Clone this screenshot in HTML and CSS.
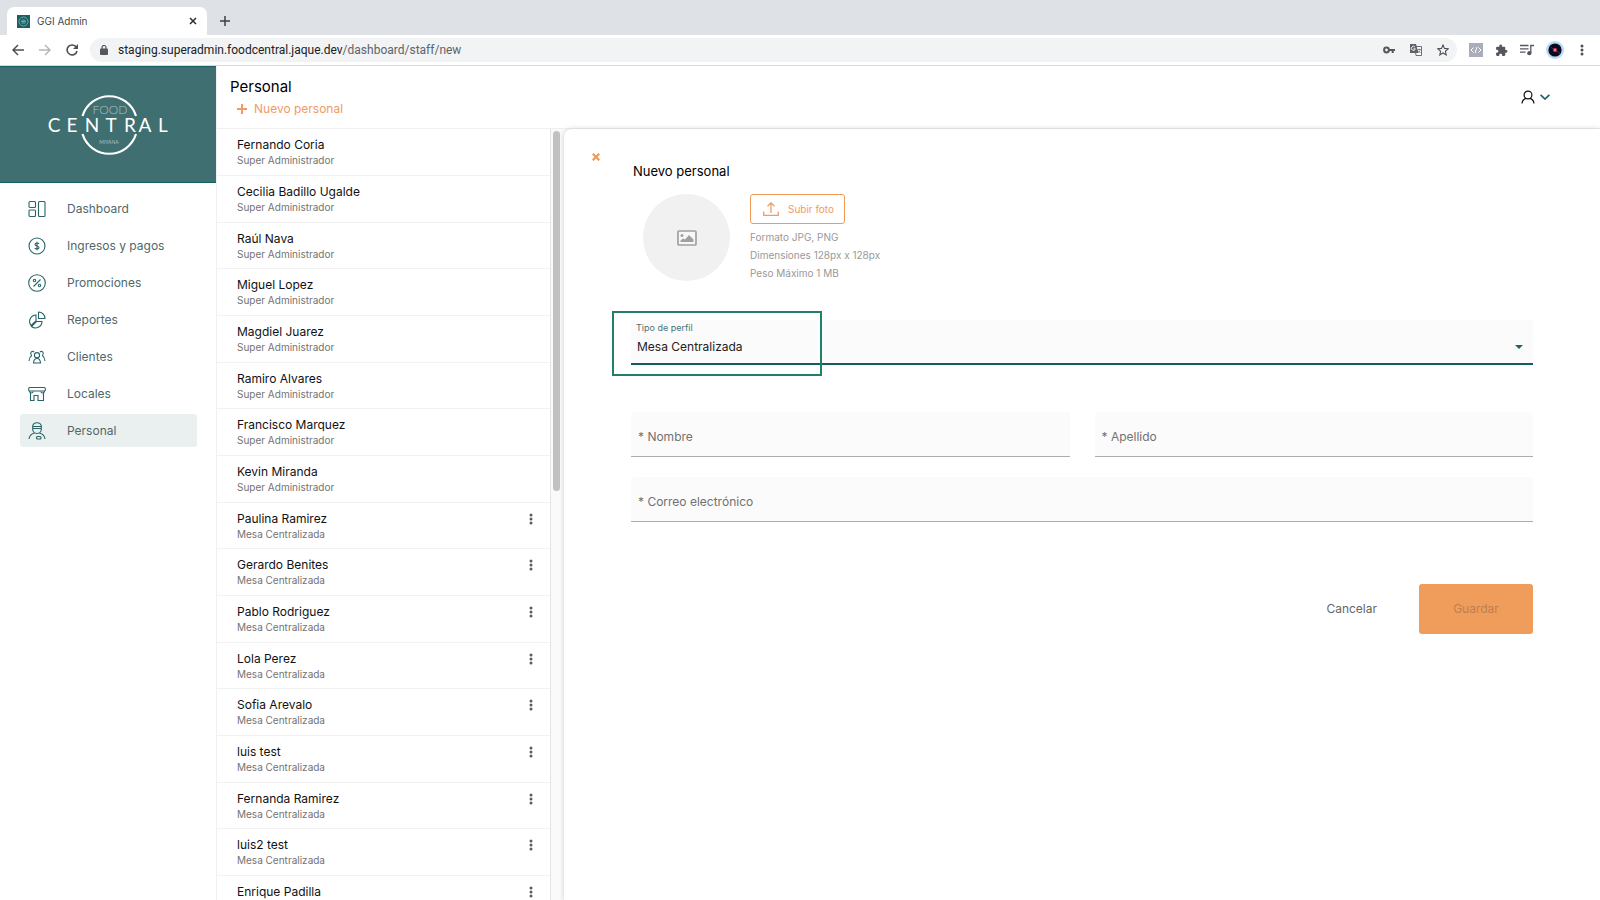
FILE: index.html
```html
<!DOCTYPE html>
<html lang="es">
<head>
<meta charset="utf-8">
<title>GGI Admin</title>
<link rel="stylesheet" href="styles.css">
</head>
<body>
<svg class="defs" width="0" height="0" aria-hidden="true">
  <symbol id="dots" viewBox="0 0 4 12"><circle cx="2" cy="2" r="1.5"/><circle cx="2" cy="6" r="1.5"/><circle cx="2" cy="10" r="1.5"/></symbol>
</svg>

<div class="tabstrip">
  <div class="tab">
    <svg class="favicon" viewBox="0 0 13 13"><rect width="13" height="13" fill="#176064"/><circle cx="6.500" cy="6.500" r="4.500" fill="none" stroke="#8fb3b4" stroke-width=".8"/><path d="M4.500 5.200h4M4 6.600h5M4.500 8h4" stroke="#a9c6c6" stroke-width=".7"/></svg>
    <span class="tab-title">GGI Admin</span>
    <button class="icon-btn" type="button" aria-label="Cerrar pestaña"><svg width="8" height="8" viewBox="0 0 8 8"><path d="M1 1l6 6M7 1L1 7" stroke="#2b2d30" stroke-width="1.500"/></svg></button>
  </div>
  <button class="icon-btn new-tab" type="button" aria-label="Nueva pestaña"><svg width="10" height="10" viewBox="0 0 10 10"><path d="M5 0v10M0 5h10" stroke="#3c4043" stroke-width="1.500"/></svg></button>
</div>

<div class="toolbar">
  <button class="icon-btn" type="button" aria-label="Atrás"><svg width="12" height="12" viewBox="0 0 12 12" fill="none" stroke="#4d5156" stroke-width="1.500"><path d="M12 6H1M6 1L1 6l5 5"/></svg></button>
  <button class="icon-btn" type="button" aria-label="Adelante"><svg width="12" height="12" viewBox="0 0 12 12" fill="none" stroke="#b4b6b9" stroke-width="1.500"><path d="M0 6h11M6 1l5 5-5 5"/></svg></button>
  <button class="icon-btn" type="button" aria-label="Recargar"><svg width="12" height="12" viewBox="0 0 12 12"><path d="M10.300 3.200A5 5 0 1 0 11 7" fill="none" stroke="#4d5156" stroke-width="1.600"/><path d="M12 0v5H7z" fill="#4d5156"/></svg></button>
  <div class="address">
    <svg width="8" height="10" viewBox="0 0 8 10"><rect y="3.500" width="8" height="6.500" rx="1" fill="#54585d"/><path d="M2 4V2.500a2 2 0 0 1 4 0V4" fill="none" stroke="#54585d" stroke-width="1.200"/></svg>
    <span class="url">staging.superadmin.foodcentral.jaque.dev<span class="url-path">/dashboard/staff/new</span></span>
    <span class="address-icons">
      <svg width="12" height="8" viewBox="0 0 12 8"><circle cx="3.500" cy="4" r="2.400" fill="none" stroke="#54585d" stroke-width="2"/><path d="M6 4h6M9.700 4v3" stroke="#54585d" stroke-width="2"/></svg>
      <svg width="12" height="12" viewBox="0 0 12 12"><path d="M5 2.500h6.500v9H6z" fill="#fff" stroke="#6a6e73"/><path d="M0 0h6l2.500 9H0z" fill="#5f6368"/><path d="M5 3.200a2 2 0 1 0 .3 1.600H3.500" fill="none" stroke="#fff" stroke-width=".9"/><path d="M7.500 5.500h3.200M9 4.600v1M10.200 5.500C10 7 9 8 8.300 8.500M8 6.500l2.500 2.500" fill="none" stroke="#6a6e73" stroke-width=".8"/></svg>
      <svg width="12" height="12" viewBox="0 0 12 12"><path d="M6 1l1.500 3.400 3.700.4-2.800 2.500.8 3.600L6 9l-3.200 1.900.8-3.600L.8 4.800l3.700-.4z" fill="none" stroke="#4d5156" stroke-width="1.100"/></svg>
    </span>
  </div>
  <div class="extensions">
    <svg width="14" height="14" viewBox="0 0 14 14"><rect width="14" height="14" fill="#a9aeba"/><path d="M4.500 4.500L2 7l2.500 2.500M9.500 4.500L12 7l-2.500 2.500M8 4L6 10" fill="none" stroke="#fff"/></svg>
    <svg width="13" height="13" viewBox="0 0 24 24"><path d="M20.500 11H19V7a2 2 0 0 0-2-2h-4V3.500a2.500 2.500 0 0 0-5 0V5H4a2 2 0 0 0-2 2v3.800h1.500a2.700 2.700 0 0 1 0 5.400H2V20a2 2 0 0 0 2 2h3.800v-1.500a2.700 2.700 0 0 1 5.400 0V22H17a2 2 0 0 0 2-2v-4h1.500a2.500 2.500 0 0 0 0-5z" fill="#54585d"/></svg>
    <svg width="14" height="12" viewBox="0 0 14 12"><path d="M0 1.500h8.500M0 4.800h8.500M0 8.200h5.500M10.800 9V1.500H14" fill="none" stroke="#54585d" stroke-width="1.300"/><circle cx="9.300" cy="9.200" r="2.100" fill="#54585d"/></svg>
    <svg width="18" height="18" viewBox="0 0 18 18"><circle cx="9" cy="9" r="9" fill="#b5dbf7"/><circle cx="9" cy="9" r="6.600" fill="#0b0a1c"/><path d="M4.500 6L8 8.500M10 9.500l4 3" stroke="#3b3763"/><circle cx="9" cy="9" r="2" fill="#e8335f"/><circle cx="9" cy="9" r=".8" fill="#ffd0a0"/></svg>
    <button class="icon-btn dots-dark" type="button" aria-label="Menú"><svg width="4" height="12"><use href="#dots"/></svg></button>
  </div>
</div>

<div class="app">
  <aside class="sidebar">
    <div class="brand">
      <svg width="124" height="62" viewBox="0 0 124 62" role="img" aria-label="Food Central Miyana">
        <path d="M36.500 22A28 28 0 0 1 90 22M36.500 40A28 28 0 0 0 90 40" fill="none" stroke="#fff" stroke-width="2.200"/>
        <text x="64" y="20" class="brand-small">FOOD</text>
        <g class="brand-name"><text x="8" y="38">C</text><text x="26" y="38">E</text><text x="46" y="38">N</text><text x="65" y="38">T</text><text x="84" y="38">R</text><text x="99" y="38">A</text><text x="117" y="38">L</text></g>
        <text x="63" y="50" class="brand-tiny">MIYANA</text>
      </svg>
    </div>
    <nav class="nav">
      <a class="nav-item" href="#"><svg viewBox="0 0 18 18"><rect x="1" y="1.500" width="6.500" height="6" rx="1"/><rect x="1" y="10" width="6.500" height="6.500" rx="1"/><rect x="10.500" y="1.500" width="6.500" height="15" rx="1"/></svg>Dashboard</a>
      <a class="nav-item" href="#"><svg viewBox="0 0 18 18"><circle cx="9" cy="9" r="8"/><path d="M11 6.800C10.500 5.800 7 5.500 7 7.400c0 2 4 1.200 4 3.200 0 1.800-3.500 1.700-4.200.5M9 4.800v8.400"/></svg>Ingresos y pagos</a>
      <a class="nav-item" href="#"><svg viewBox="0 0 18 18"><circle cx="9" cy="9" r="8.300"/><path d="M12.500 5.500l-7 7"/><circle cx="6.500" cy="6.500" r="1.200"/><circle cx="11.500" cy="11.500" r="1.200"/></svg>Promociones</a>
      <a class="nav-item" href="#"><svg viewBox="0 0 18 18"><path d="M10.500 1v6.500H17A6.500 6.500 0 0 0 10.500 1zM8 4A6.500 6.500 0 0 0 3 14.500L8 10zM3.500 15.500A6.500 6.500 0 0 0 14 10.500H8.500z"/></svg>Reportes</a>
      <a class="nav-item" href="#"><svg viewBox="0 0 18 18"><circle cx="9" cy="7.200" r="2.600"/><path d="M5.500 15c.2-3 1.200-4.500 3.500-4.500s3.300 1.500 3.500 4.500zM6 4C5 3 2.500 3.300 2.800 5.500c.1 1 .7 1.700.7 2.300C2 8.800 1.200 10 1 13M12 4c1-1 3.500-.7 3.200 1.500-.1 1-.7 1.700-.7 2.300 1.500 1 2.300 2.200 2.500 5.200"/></svg>Clientes</a>
      <a class="nav-item" href="#"><svg viewBox="0 0 18 18"><rect x=".7" y="2.500" width="16.600" height="3.500" rx="1"/><path d="M2.500 7v8.500h3.500v-5h4v5h5.500V7M1.500 6c0 2.500 3.500 2.500 3.500.5M13 6.500c0 2 3.500 2 3.500-.5"/></svg>Locales</a>
      <a class="nav-item nav-item-active" href="#" aria-current="page"><svg viewBox="0 0 18 18"><path d="M4.500 4.500C5 1.500 6.500.7 9 .7s4 .8 4.500 3.800M4.300 4.500h9.400M4.300 6.500h9.400M4.700 4.500V7c0 2.500 1.800 4.500 4.300 4.500s4.300-2 4.300-4.500V4.500M6.500 11c-3 .8-5 2-5.500 6M11.500 11c3 .8 5 2 5.500 6"/><rect x="8.500" y="14.500" width="4.500" height="2.500" rx="1"/></svg>Personal</a>
    </nav>
  </aside>

  <main class="main">
    <header class="header">
      <div class="header-titles">
        <h1 class="header-title">Personal</h1>
        <button class="add-btn" type="button"><svg width="10" height="10" viewBox="0 0 10 10"><path d="M5 0v10M0 5h10" stroke="currentColor" stroke-width="2"/></svg>Nuevo personal</button>
      </div>
      <button class="account" type="button" aria-label="Cuenta">
        <svg width="14" height="14" viewBox="0 0 14 14" fill="none" stroke="#111" stroke-width="1.200"><circle cx="7" cy="5" r="3.900"/><path d="M1 13.500C1.300 10.500 3 9 5 8.400M13 13.500c-.3-3-2-4.500-4-5.100"/></svg>
        <svg width="10" height="6" viewBox="0 0 10 6" fill="none" stroke="#1b6467" stroke-width="1.700"><path d="M.6.800L5 5 9.400.8"/></svg>
      </button>
    </header>

    <div class="content">
      <ul class="staff-list">
        <li class="staff"><div><p class="staff-name">Fernando Coria</p><p class="staff-role">Super Administrador</p></div></li>
        <li class="staff"><div><p class="staff-name">Cecilia Badillo Ugalde</p><p class="staff-role">Super Administrador</p></div></li>
        <li class="staff"><div><p class="staff-name">Raúl Nava</p><p class="staff-role">Super Administrador</p></div></li>
        <li class="staff"><div><p class="staff-name">Miguel Lopez</p><p class="staff-role">Super Administrador</p></div></li>
        <li class="staff"><div><p class="staff-name">Magdiel Juarez</p><p class="staff-role">Super Administrador</p></div></li>
        <li class="staff"><div><p class="staff-name">Ramiro Alvares</p><p class="staff-role">Super Administrador</p></div></li>
        <li class="staff"><div><p class="staff-name">Francisco Marquez</p><p class="staff-role">Super Administrador</p></div></li>
        <li class="staff"><div><p class="staff-name">Kevin Miranda</p><p class="staff-role">Super Administrador</p></div></li>
        <li class="staff"><div><p class="staff-name">Paulina Ramirez</p><p class="staff-role">Mesa Centralizada</p></div><button class="icon-btn more" type="button" aria-label="Opciones"><svg width="4" height="12"><use href="#dots"/></svg></button></li>
        <li class="staff"><div><p class="staff-name">Gerardo Benites</p><p class="staff-role">Mesa Centralizada</p></div><button class="icon-btn more" type="button" aria-label="Opciones"><svg width="4" height="12"><use href="#dots"/></svg></button></li>
        <li class="staff"><div><p class="staff-name">Pablo Rodriguez</p><p class="staff-role">Mesa Centralizada</p></div><button class="icon-btn more" type="button" aria-label="Opciones"><svg width="4" height="12"><use href="#dots"/></svg></button></li>
        <li class="staff"><div><p class="staff-name">Lola Perez</p><p class="staff-role">Mesa Centralizada</p></div><button class="icon-btn more" type="button" aria-label="Opciones"><svg width="4" height="12"><use href="#dots"/></svg></button></li>
        <li class="staff"><div><p class="staff-name">Sofia Arevalo</p><p class="staff-role">Mesa Centralizada</p></div><button class="icon-btn more" type="button" aria-label="Opciones"><svg width="4" height="12"><use href="#dots"/></svg></button></li>
        <li class="staff"><div><p class="staff-name">luis test</p><p class="staff-role">Mesa Centralizada</p></div><button class="icon-btn more" type="button" aria-label="Opciones"><svg width="4" height="12"><use href="#dots"/></svg></button></li>
        <li class="staff"><div><p class="staff-name">Fernanda Ramirez</p><p class="staff-role">Mesa Centralizada</p></div><button class="icon-btn more" type="button" aria-label="Opciones"><svg width="4" height="12"><use href="#dots"/></svg></button></li>
        <li class="staff"><div><p class="staff-name">luis2 test</p><p class="staff-role">Mesa Centralizada</p></div><button class="icon-btn more" type="button" aria-label="Opciones"><svg width="4" height="12"><use href="#dots"/></svg></button></li>
        <li class="staff"><div><p class="staff-name">Enrique Padilla</p></div><button class="icon-btn more" type="button" aria-label="Opciones"><svg width="4" height="12"><use href="#dots"/></svg></button></li>
      </ul>
      <div class="scroll-track"><div class="scroll-thumb"></div></div>

      <section class="panel">
        <button class="icon-btn close" type="button" aria-label="Cerrar"><svg width="8" height="8" viewBox="0 0 8 8"><path d="M.7.700l6.600 6.600M7.300.700L.7 7.300" stroke="#f19a56" stroke-width="2.200"/></svg></button>
        <form class="form">
          <h2 class="form-title">Nuevo personal</h2>
          <div class="photo">
            <div class="avatar"><svg width="20" height="16" viewBox="0 0 20 16"><rect x="1" y="1" width="18" height="14" rx="1" fill="#f7f7f7" stroke="#a0a0a0" stroke-width="1.700"/><circle cx="5" cy="5.500" r="1.500" fill="#a0a0a0"/><path d="M3.500 12v-1.500L6 8.500l2 1 4-4.500 4.500 4.500V12z" fill="#a0a0a0"/></svg></div>
            <div class="photo-info">
              <button class="upload" type="button"><svg width="16" height="14" viewBox="0 0 16 14" fill="none" stroke="currentColor" stroke-width="1.300"><path d="M8 11V1M4.500 4.300L8 .9l3.500 3.400M.7 9.500v3.800h14.600V9.500"/></svg>Subir foto</button>
              <p class="hint">Formato JPG, PNG</p>
              <p class="hint">Dimensiones 128px x 128px</p>
              <p class="hint">Peso Máximo 1 MB</p>
            </div>
          </div>
          <div class="field field-select">
            <label class="label-top" for="perfil">Tipo de perfil</label>
            <select class="control select" id="perfil"><option>Mesa Centralizada</option></select>
            <svg class="caret" width="8" height="4" viewBox="0 0 8 4"><path d="M0 0h8L4 4z" fill="#1b6467"/></svg>
            <div class="highlight"></div>
          </div>
          <div class="fields">
            <div class="field"><label class="label-mid" for="nombre">* Nombre</label><input class="control" id="nombre" type="text"></div>
            <div class="field"><label class="label-mid" for="apellido">* Apellido</label><input class="control" id="apellido" type="text"></div>
            <div class="field field-wide"><label class="label-mid" for="correo">* Correo electrónico</label><input class="control" id="correo" type="email"></div>
          </div>
          <div class="actions">
            <button class="cancel" type="button">Cancelar</button>
            <button class="save" type="submit" disabled>Guardar</button>
          </div>
        </form>
      </section>
    </div>
  </main>
</div>
</body>
</html>
```

FILE: styles.css
```css
* { box-sizing: border-box; }
html, body { height: 100%; }
body {
  margin: 0;
  display: flex;
  flex-direction: column;
  overflow: hidden;
  background: #fff;
  color: #111;
  font: 12px/16px Inter, "Liberation Sans", sans-serif;
}
h1, h2, p, ul { margin: 0; padding: 0; font-weight: 400; }
ul { list-style: none; }
button, input, select { font: inherit; }
button { border: 0; background: none; padding: 0; }
svg { flex: none; display: block; }
.defs { position: absolute; }
.icon-btn { display: flex; align-items: center; justify-content: center; }

/* Browser window */
.tabstrip {
  flex: none;
  display: flex;
  align-items: flex-end;
  height: 35px;
  padding-left: 7px;
  background: #dee1e6;
}
.tab {
  display: flex;
  align-items: center;
  width: 200px;
  height: 28px;
  padding: 0 10px;
  border-radius: 7px 7px 0 0;
  background: #fff;
}
.favicon { width: 13px; height: 13px; }
.tab-title { flex: 1; margin-left: 7px; font-size: 10px; color: #45494d; }
.new-tab { height: 28px; margin-left: 13px; }
.toolbar {
  flex: none;
  display: flex;
  align-items: center;
  gap: 15px;
  height: 31px;
  padding: 0 16px 0 12px;
  border-bottom: 1px solid #d8dadd;
  background: #fff;
}
.address {
  flex: 1;
  display: flex;
  align-items: center;
  height: 24px;
  margin-left: -3px;
  padding: 0 8px 0 10px;
  border-radius: 12px;
  background: #f1f3f4;
}
.url { flex: 1; margin-left: 10px; font-family: Roboto, sans-serif; font-size: 12px; color: #202124; }
.url-path { color: #5f6368; }
.address-icons { display: flex; align-items: center; gap: 15px; }
.extensions { display: flex; align-items: center; gap: 12px; margin-left: -3px; }
.dots-dark { margin-left: 4px; fill: #4d5156; }

/* Application */
.app { flex: 1; display: flex; min-height: 0; }
.sidebar { flex: none; width: 217px; border-right: 1px solid #f0f0f0; }
.brand {
  display: flex;
  align-items: center;
  justify-content: center;
  height: 117px;
  border: solid #176064;
  border-width: 1px 0;
  background: #3f6f70;
}
.brand-small, .brand-tiny { font-family: Lato, sans-serif; fill: #a9c1c1; text-anchor: middle; }
.brand-small { font-size: 12px; font-weight: 300; }
.brand-tiny { font-size: 5px; }
.brand-name { font-family: Lato, sans-serif; font-size: 19px; fill: #fff; text-anchor: middle; }
.nav { display: flex; flex-direction: column; gap: 4px; padding: 9px 19px 9px 20px; }
.nav-item {
  display: flex;
  align-items: center;
  gap: 21px;
  height: 33px;
  padding-left: 8px;
  border-radius: 3px;
  color: #50686b;
  text-decoration: none;
}
.nav-item svg { width: 18px; height: 18px; fill: none; stroke: #286568; stroke-width: 1.1; }
.nav-item-active { background: #eaefef; }

.main { flex: 1; min-width: 0; display: flex; flex-direction: column; }
.header {
  flex: none;
  display: flex;
  align-items: center;
  justify-content: space-between;
  height: 63px;
  padding: 0 50px 0 13px;
  border-bottom: 1px solid #f0f0f0;
}
.header-titles { display: flex; flex-direction: column; align-items: flex-start; gap: 1px; }
.header-title { font-size: 15px; line-height: 22px; color: #000; }
.add-btn { display: flex; align-items: center; gap: 7px; padding-left: 7px; line-height: 20px; color: #f19a66; }
.account { display: flex; align-items: center; gap: 5px; }

.content { flex: 1; display: flex; min-height: 0; background: #fafafa; }
.staff-list { flex: none; width: 333px; overflow: hidden; background: #fff; }
.staff {
  display: flex;
  justify-content: space-between;
  height: 47px;
  padding: 8px 16px 0 20px;
  border-bottom: 1px solid #f2f2f2;
}
.staff:nth-child(3n) { height: 46px; }
.staff-name { color: #111; }
.staff-role { font-size: 10px; line-height: 15px; color: #737373; }
.more { width: 6px; height: 16px; fill: #5c5c5c; }
.scroll-track {
  flex: none;
  width: 14px;
  padding: 2px;
  border-left: 1px solid #e4e4e4;
}
.scroll-thumb { width: 7px; height: 47%; border-radius: 4px; background: #c1c1c1; }

.panel {
  position: relative;
  flex: 1;
  min-width: 0;
  padding: 30px 67px 0;
  border-radius: 8px 0 0 0;
  background: #fff;
  box-shadow: 0 0 5px rgba(0, 0, 0, .18);
}
.close { position: absolute; left: 28px; top: 24px; }
.form-title { padding-left: 2px; font-size: 13px; line-height: 24px; color: #000; }
.photo { display: flex; gap: 20px; padding: 11px 0 0 12px; }
.avatar {
  display: flex;
  align-items: center;
  justify-content: center;
  width: 87px;
  height: 87px;
  border-radius: 50%;
  background: #f1f1f1;
}
.upload {
  display: flex;
  align-items: center;
  gap: 9px;
  height: 30px;
  margin-bottom: 4px;
  padding: 0 10px 0 12px;
  border: 1px solid #f19a56;
  border-radius: 3px;
  font-size: 10px;
  color: #f19a66;
}
.hint { font-size: 10px; line-height: 18px; color: #999; }

.field { position: relative; }
.control {
  display: block;
  width: 100%;
  height: 45px;
  padding: 0 7px;
  border: 0;
  border-bottom: 1px solid #acacac;
  border-radius: 3px 3px 0 0;
  background: #fbfbfb;
  outline: 0;
}
.select {
  appearance: none;
  padding: 10px 6px 0;
  border-bottom: 2px solid #145c5f;
  color: #222;
}
.field-select { margin-top: 38px; }
.label-top { position: absolute; left: 5px; top: 0; font-size: 9px; color: #477577; }
.label-mid { position: absolute; left: 7px; top: 17px; color: #717171; }
.caret { position: absolute; right: 10px; top: 25px; }
.highlight {
  position: absolute;
  left: -19px;
  top: -9px;
  width: 210px;
  height: 65px;
  border: 2px solid #21806a;
  pointer-events: none;
}
.fields {
  display: grid;
  grid-template-columns: 1fr 1fr;
  gap: 20px 25px;
  margin-top: 47px;
}
.field-wide { grid-column: 1 / -1; }
.actions { display: flex; justify-content: flex-end; gap: 42px; margin-top: 62px; }
.cancel { color: #666; }
.save {
  width: 114px;
  height: 50px;
  border-radius: 3px;
  background: #f09d5b;
  color: #bd8050;
}
```
